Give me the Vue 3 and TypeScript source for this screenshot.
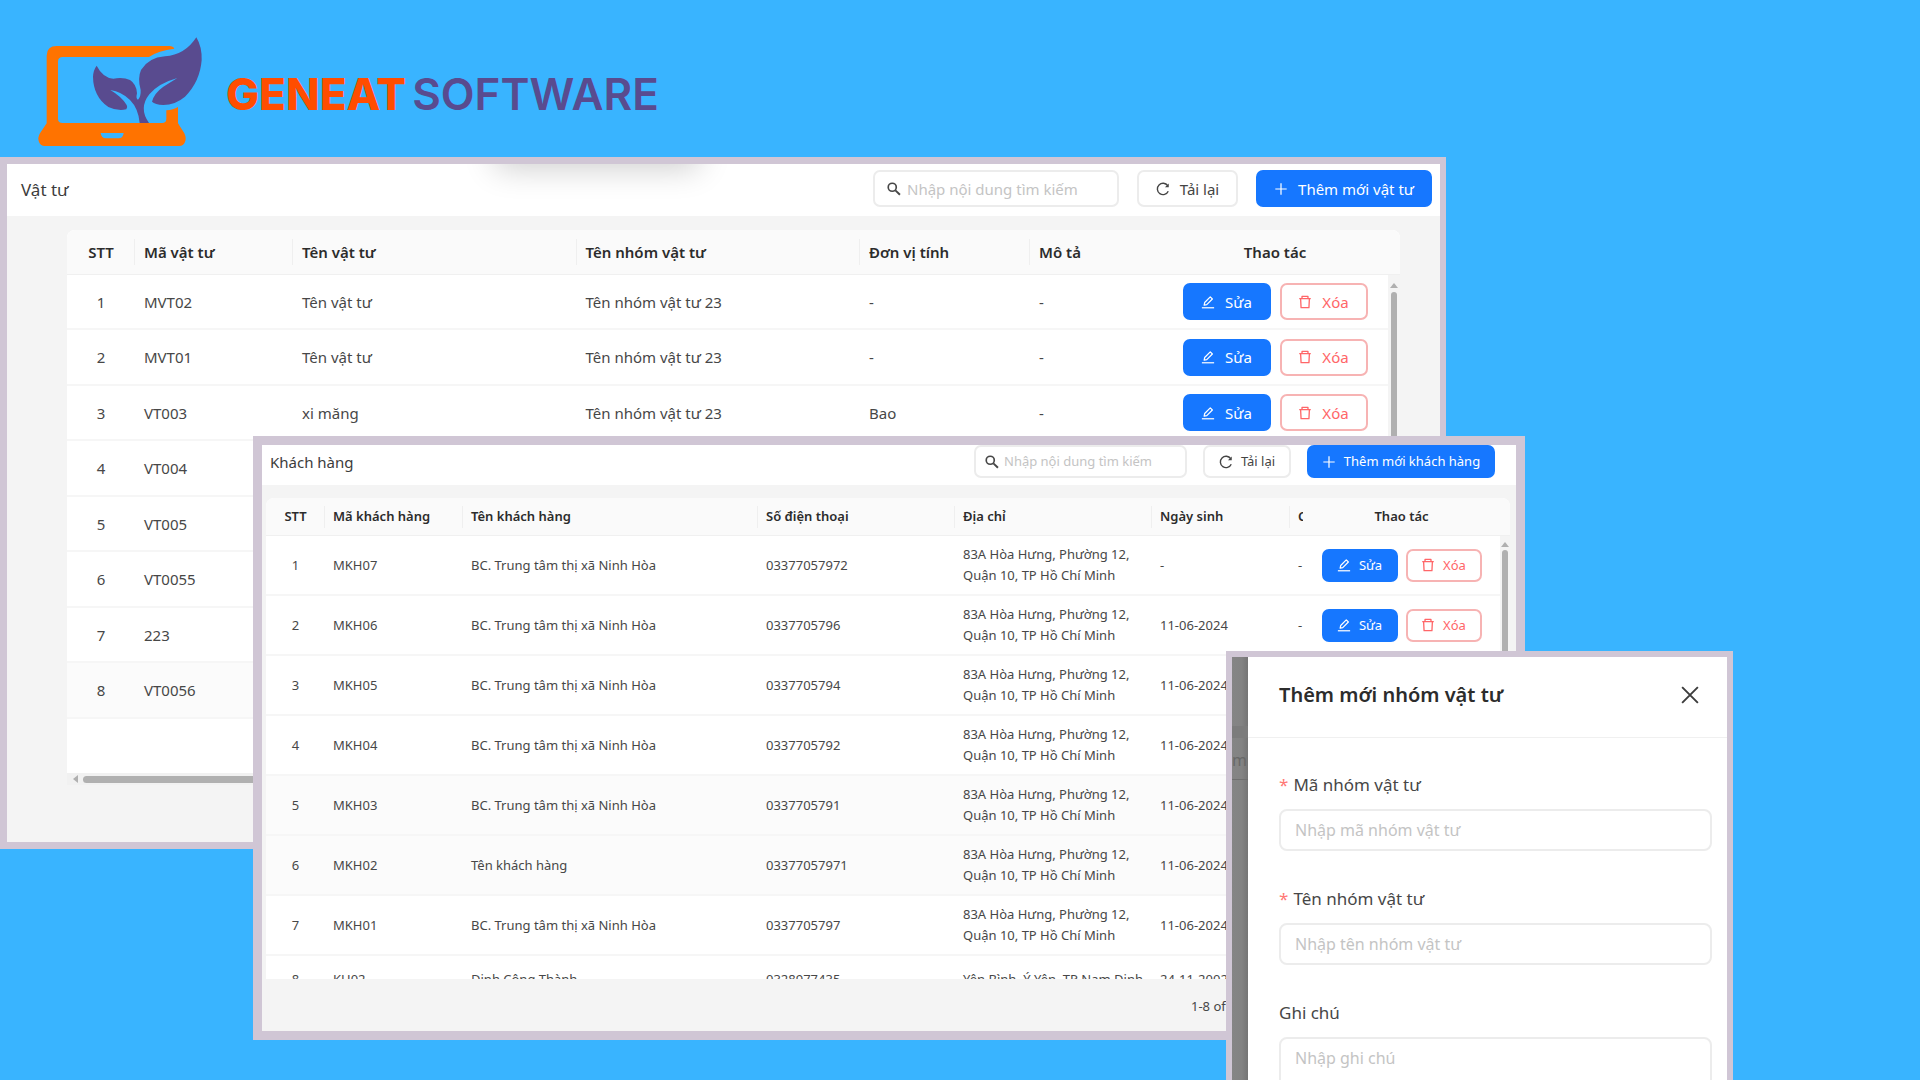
<script setup lang="ts">
import { ref } from 'vue'

interface Material {
  code: string
  name: string
  group: string
  unit: string
  note: string
}

interface Customer {
  code: string
  name: string
  phone: string
  address: string
  birthday: string
  extra: string
}

const materials: Material[] = [
  { code: 'MVT02', name: 'Tên vật tư', group: 'Tên nhóm vật tư 23', unit: '-', note: '-' },
  { code: 'MVT01', name: 'Tên vật tư', group: 'Tên nhóm vật tư 23', unit: '-', note: '-' },
  { code: 'VT003', name: 'xi măng', group: 'Tên nhóm vật tư 23', unit: 'Bao', note: '-' },
  { code: 'VT004', name: '', group: '', unit: '', note: '' },
  { code: 'VT005', name: '', group: '', unit: '', note: '' },
  { code: 'VT0055', name: '', group: '', unit: '', note: '' },
  { code: '223', name: '', group: '', unit: '', note: '' },
  { code: 'VT0056', name: '', group: '', unit: '', note: '' },
]

const centre = 'BC. Trung tâm thị xã Ninh Hòa'
const district = '83A Hòa Hưng, Phường 12, Quận 10, TP Hồ Chí Minh'

const customers: Customer[] = [
  { code: 'MKH07', name: centre, phone: '03377057972', address: district, birthday: '-', extra: '-' },
  { code: 'MKH06', name: centre, phone: '0337705796', address: district, birthday: '11-06-2024', extra: '-' },
  { code: 'MKH05', name: centre, phone: '0337705794', address: district, birthday: '11-06-2024', extra: '' },
  { code: 'MKH04', name: centre, phone: '0337705792', address: district, birthday: '11-06-2024', extra: '' },
  { code: 'MKH03', name: centre, phone: '0337705791', address: district, birthday: '11-06-2024', extra: '' },
  { code: 'MKH02', name: 'Tên khách hàng', phone: '03377057971', address: district, birthday: '11-06-2024', extra: '' },
  { code: 'MKH01', name: centre, phone: '0337705797', address: district, birthday: '11-06-2024', extra: '' },
  { code: 'KH02', name: 'Đinh Công Thành', phone: '0328977435', address: 'Yên Bình, Ý Yên, TP Nam Định', birthday: '24-11-2002', extra: '' },
]

const materialQuery = ref('')
const customerQuery = ref('')
const groupCode = ref('')
const groupName = ref('')
const groupNote = ref('')
</script>

<template>
  <main class="stage">
    <svg class="sprite" aria-hidden="true">
      <symbol id="i-search" viewBox="0 0 16 16">
        <circle cx="6" cy="6" r="4.6" fill="none" stroke="currentColor" stroke-width="1.9" />
        <path d="M9.6 9.6L14.8 14.6" fill="none" stroke="currentColor" stroke-width="2.2" />
      </symbol>
      <symbol id="i-reload" viewBox="0 0 16 16">
        <path d="M13.4 4.2A6.5 6.5 0 1 0 14 10.6" fill="none" stroke="currentColor" stroke-width="1.6" />
        <path d="M14.6 1.6V6H10.2Z" fill="currentColor" />
      </symbol>
      <symbol id="i-plus" viewBox="0 0 16 16">
        <path d="M8 1.5V14.5M1.5 8H14.5" fill="none" stroke="currentColor" stroke-width="1.4" />
      </symbol>
      <symbol id="i-edit" viewBox="0 0 16 16">
        <path d="M1 14.6H15" fill="none" stroke="currentColor" stroke-width="1.4" />
        <path d="M3.6 11.6L4.2 8.6L10.6 2.2L13 4.6L6.6 11Z" fill="none" stroke="currentColor" stroke-width="1.4" stroke-linejoin="round" />
      </symbol>
      <symbol id="i-trash" viewBox="0 0 16 16">
        <path d="M1.4 4.2H14.6M4.6 4V1.6H11.4V4M3 4.4L3.5 14.4H12.5L13 4.4" fill="none" stroke="currentColor" stroke-width="1.5" stroke-linejoin="round" />
      </symbol>
      <symbol id="i-close" viewBox="0 0 16 16">
        <path d="M1 1L15 15M15 1L1 15" fill="none" stroke="currentColor" stroke-width="1.7" />
      </symbol>
    </svg>

    <header class="brand">
      <svg class="brand-mark" viewBox="0 0 570 405" role="img" aria-label="Geneat Software">
        <path
          fill="#ff7300"
          fill-rule="evenodd"
          d="M50 295V92Q50 63 80 63H418Q430 63 433 71Q385 76 357 96H98Q84 96 84 110V281Q84 294 98 294H396Q409 294 409 281V256Q430 255 444 246V295L463 325Q470 340 465 351Q460 363 448 363H44Q32 363 27 351Q22 338 30 325ZM212 324H281Q279 340 266 340H228Q214 340 212 324Z"
        />
        <path
          fill="#594b8f"
          d="M499 37Q516 65 515 105Q510 170 465 215Q435 240 400 240Q375 238 366 230Q372 205 400 185L442 159Q385 175 358 208Q325 250 357 294H329Q325 250 300 225Q275 200 241 195Q275 215 290 240Q294 247 289 253Q265 260 235 246Q190 215 189 155Q190 135 200 122Q218 158 250 161Q280 156 300 165Q320 178 321 205Q317 222 324 224Q333 215 332 195Q322 160 333 135Q355 98 405 94Q465 90 499 37Z"
        />
      </svg>
      <h1 class="brand-name"><span class="brand-first">GENEAT</span><span class="brand-second">SOFTWARE</span></h1>
    </header>

    <section class="window materials">
      <header class="bar">
        <h2 class="bar-title">Vật tư</h2>
        <label class="search">
          <svg class="icon"><use href="#i-search" /></svg>
          <input v-model="materialQuery" type="text" placeholder="Nhập nội dung tìm kiếm" aria-label="Tìm kiếm vật tư" />
        </label>
        <button class="btn plain" type="button"><svg class="icon"><use href="#i-reload" /></svg>Tải lại</button>
        <button class="btn primary" type="button"><svg class="icon"><use href="#i-plus" /></svg>Thêm mới vật tư</button>
      </header>
      <div class="card">
        <div class="viewport">
          <table>
            <colgroup>
              <col class="c-index" /><col class="c-code" /><col /><col /><col class="c-unit" /><col class="c-note" /><col class="c-actions" /><col class="c-rail" />
            </colgroup>
            <thead>
              <tr>
                <th class="mid split">STT</th>
                <th class="split">Mã vật tư</th>
                <th class="split">Tên vật tư</th>
                <th class="split">Tên nhóm vật tư</th>
                <th class="split">Đơn vị tính</th>
                <th>Mô tả</th>
                <th class="mid">Thao tác</th>
                <th></th>
              </tr>
            </thead>
            <tbody>
              <tr v-for="(row, i) in materials" :key="row.code" :class="{ shaded: i === 7 }">
                <td class="mid">{{ i + 1 }}</td>
                <td>{{ row.code }}</td>
                <td>{{ row.name }}</td>
                <td>{{ row.group }}</td>
                <td>{{ row.unit }}</td>
                <td>{{ row.note }}</td>
                <td>
                  <div v-if="row.name" class="actions">
                    <button class="btn primary" type="button"><svg class="icon"><use href="#i-edit" /></svg>Sửa</button>
                    <button class="btn danger" type="button"><svg class="icon"><use href="#i-trash" /></svg>Xóa</button>
                  </div>
                </td>
                <td></td>
              </tr>
            </tbody>
          </table>
          <div class="rail"><span class="arrow-up"></span><span class="thumb"></span></div>
        </div>
        <div class="rail-x"><span class="arrow-left"></span><span class="thumb-x"></span></div>
      </div>
    </section>

    <section class="window customers">
      <header class="bar">
        <h2 class="bar-title">Khách hàng</h2>
        <label class="search">
          <svg class="icon"><use href="#i-search" /></svg>
          <input v-model="customerQuery" type="text" placeholder="Nhập nội dung tìm kiếm" aria-label="Tìm kiếm khách hàng" />
        </label>
        <button class="btn plain" type="button"><svg class="icon"><use href="#i-reload" /></svg>Tải lại</button>
        <button class="btn primary" type="button"><svg class="icon"><use href="#i-plus" /></svg>Thêm mới khách hàng</button>
      </header>
      <div class="card">
        <div class="viewport">
          <table>
            <colgroup>
              <col class="c-index" /><col class="c-code" /><col /><col class="c-phone" /><col class="c-address" /><col class="c-birthday" /><col class="c-extra" /><col class="c-actions" /><col class="c-rail" />
            </colgroup>
            <thead>
              <tr>
                <th class="mid split">STT</th>
                <th class="split">Mã khách hàng</th>
                <th class="split">Tên khách hàng</th>
                <th class="split">Số điện thoại</th>
                <th class="split">Địa chỉ</th>
                <th class="split">Ngày sinh</th>
                <th class="cut">C</th>
                <th class="mid">Thao tác</th>
                <th></th>
              </tr>
            </thead>
            <tbody>
              <tr v-for="(row, i) in customers" :key="row.code" :class="{ shaded: i === 4 || i === 5 }">
                <td class="mid">{{ i + 1 }}</td>
                <td>{{ row.code }}</td>
                <td>{{ row.name }}</td>
                <td>{{ row.phone }}</td>
                <td>{{ row.address }}</td>
                <td>{{ row.birthday }}</td>
                <td class="cut">{{ row.extra }}</td>
                <td>
                  <div v-if="row.extra" class="actions">
                    <button class="btn primary" type="button"><svg class="icon"><use href="#i-edit" /></svg>Sửa</button>
                    <button class="btn danger" type="button"><svg class="icon"><use href="#i-trash" /></svg>Xóa</button>
                  </div>
                </td>
                <td></td>
              </tr>
            </tbody>
          </table>
          <div class="rail"><span class="arrow-up"></span><span class="thumb"></span></div>
        </div>
        <p class="pager">1-8 of</p>
      </div>
    </section>

    <section class="window editor">
      <div class="mask"><span class="mask-field">m</span></div>
      <form class="drawer" @submit.prevent>
        <header class="drawer-head">
          <h2 class="drawer-title">Thêm mới nhóm vật tư</h2>
          <button class="close" type="button" aria-label="Đóng"><svg class="icon"><use href="#i-close" /></svg></button>
        </header>
        <div class="fields">
          <div class="field">
            <label class="required" for="group-code">Mã nhóm vật tư</label>
            <input id="group-code" v-model="groupCode" type="text" placeholder="Nhập mã nhóm vật tư" />
          </div>
          <div class="field">
            <label class="required" for="group-name">Tên nhóm vật tư</label>
            <input id="group-name" v-model="groupName" type="text" placeholder="Nhập tên nhóm vật tư" />
          </div>
          <div class="field">
            <label for="group-note">Ghi chú</label>
            <textarea id="group-note" v-model="groupNote" rows="4" placeholder="Nhập ghi chú"></textarea>
          </div>
        </div>
      </form>
    </section>
  </main>
</template>

<style>
body {
  margin: 0;
}
</style>

<style scoped>
* {
  box-sizing: border-box;
}

.stage {
  position: relative;
  min-height: 100vh;
  overflow: hidden;
  background: #39b4ff;
  color: #474747;
  font-family: 'Noto Sans', 'Open Sans', sans-serif;
}

.sprite {
  position: absolute;
  width: 0;
  height: 0;
}

h1,
h2,
p {
  margin: 0;
}

button,
input,
textarea {
  font: inherit;
}

.icon {
  flex: none;
  width: 14px;
  height: 14px;
}

/* Brand */
.brand {
  display: flex;
  align-items: center;
  gap: 6px;
  padding: 25px 0 0 30px;
}

.brand-mark {
  flex: none;
  width: 190px;
  height: 135px;
}

.brand-name {
  display: flex;
  gap: 6px;
  padding-top: 2px;
  font-family: Inter, sans-serif;
  font-size: 44px;
  line-height: 52px;
  font-weight: 600;
  color: #594b8f;
}

.brand-first {
  font-weight: 800;
  color: #ff4d00;
}

/* Windows */
.window {
  position: absolute;
  border: 7px solid #d0c6d5;
  background: #f4f4f4;
}

.bar {
  position: relative;
  display: flex;
  background: #fff;
  overflow: hidden;
}

.bar-title {
  flex: 1;
  font-weight: 400;
  color: #3c3c3c;
}

.search {
  display: flex;
  align-items: center;
  border: 2px solid #ececec;
  border-radius: 7px;
  background: #fff;
}

.search input {
  flex: 1;
  min-width: 0;
  padding: 0;
  border: 0;
  outline: 0;
  background: none;
}

input::placeholder,
textarea::placeholder {
  color: #c4c4c4;
  opacity: 1;
}

.btn {
  display: flex;
  align-items: center;
  justify-content: center;
  padding: 0;
  border: 2px solid #ececec;
  border-radius: 7px;
  background: #fff;
  color: #444;
  white-space: nowrap;
}

.btn.primary {
  border-color: #1677ff;
  background: #1677ff;
  color: #fff;
}

.btn.danger {
  border-color: #f7b3b3;
  color: #ff6668;
}

.actions {
  display: flex;
  justify-content: center;
}

table {
  width: 100%;
  table-layout: fixed;
  border-collapse: separate;
  border-spacing: 0;
  background: #fff;
}

th {
  border-bottom: 1px solid #f0f0f0;
  background: #fafafa;
  color: #2c2c2c;
  font-weight: 600;
  text-align: left;
}

th.split {
  background: linear-gradient(#efefef, #efefef) right center / 1px 26px no-repeat #fafafa;
}

td {
  border-bottom: 2px solid #f6f6f6;
}

.shaded td {
  background: #fbfbfb;
}

th.mid,
td.mid {
  text-align: center;
}

.viewport {
  position: relative;
  overflow: hidden;
  border-radius: 8px 8px 0 0;
}

.rail {
  position: absolute;
  right: 0;
  bottom: 0;
  display: flex;
  flex-direction: column;
  align-items: center;
  gap: 4px;
  padding-top: 8px;
  background: #f4f4f4;
}

.arrow-up {
  border: 4px solid transparent;
  border-top: 0;
  border-bottom: 5px solid #b0b0b0;
}

.thumb {
  flex: 1;
  width: 6px;
  border-radius: 3px;
  background: #b0b0b0;
}

/* Materials */
.materials {
  top: 157px;
  left: 0;
  right: 474px;
  border-right-width: 6px;
  font-size: 15px;
  line-height: 24px;
}

.materials .bar {
  gap: 18px;
  height: 52px;
  padding: 6px 8px 0 14px;
}

.materials .bar::before {
  content: '';
  position: absolute;
  top: -40px;
  left: 488px;
  width: 204px;
  height: 40px;
  box-shadow: 0 4px 32px rgba(0, 0, 0, 0.2);
}

.materials .bar-title {
  font-size: 17px;
  line-height: 40px;
}

.materials .search {
  width: 246px;
  height: 37px;
  gap: 6px;
  padding: 0 12px;
}

.materials .btn {
  height: 37px;
  gap: 10px;
}

.materials .bar .plain {
  width: 101px;
}

.materials .bar .primary {
  width: 176px;
}

.materials .card {
  margin: 14px 40px 57px 60px;
}

.materials .viewport {
  padding-bottom: 54px;
  background: #fff;
}

.materials th {
  height: 45px;
  padding: 0 9px;
}

.materials td {
  height: 55px;
  padding: 0 9px;
}

.materials tr:nth-child(even) td {
  height: 56px;
}

.materials .actions {
  gap: 9px;
}

.materials .actions .btn {
  width: 88px;
}

.materials .c-index {
  width: 68px;
}

.materials .c-code {
  width: 158px;
}

.materials .c-unit {
  width: 170px;
}

.materials .c-note {
  width: 132px;
}

.materials .c-actions {
  width: 226px;
}

.materials .c-rail {
  width: 12px;
}

.materials .rail {
  top: 45px;
  width: 12px;
}

.rail-x {
  display: flex;
  align-items: center;
  gap: 5px;
  height: 12px;
  padding: 0 12px 0 6px;
  background: #f1f1f1;
}

.arrow-left {
  border: 4px solid transparent;
  border-left: 0;
  border-right: 5px solid #b0b0b0;
}

.thumb-x {
  flex: 1;
  height: 7px;
  border-radius: 4px;
  background: #b0b0b0;
}

/* Customers */
.customers {
  top: 436px;
  left: 253px;
  right: 395px;
  border-width: 9px;
  font-size: 13px;
  line-height: 21px;
}

.customers .bar {
  gap: 16px;
  height: 40px;
  padding: 0 21px 0 8px;
}

.customers .bar-title {
  font-size: 15px;
  line-height: 34px;
}

.customers .search {
  width: 213px;
  height: 33px;
  gap: 5px;
  padding: 0 9px;
}

.customers .btn {
  height: 33px;
  gap: 8px;
}

.customers .bar .plain {
  width: 88px;
}

.customers .bar .primary {
  width: 188px;
}

.customers .card {
  margin: 13px 6px 0 4px;
}

.customers .viewport {
  height: 481px;
}

.customers th {
  height: 38px;
  padding: 0 8px;
}

.customers th.split {
  background-size: 1px 22px;
}

.customers td {
  height: 60px;
  padding: 0 8px;
}

.customers tr:last-child td {
  height: 49px;
}

.customers tr .cut {
  padding-right: 0;
  overflow: hidden;
}

.customers .actions {
  gap: 8px;
}

.customers .actions .btn {
  width: 76px;
}

.customers .c-index {
  width: 59px;
}

.customers .c-code {
  width: 138px;
}

.customers .c-phone,
.customers .c-address {
  width: 197px;
}

.customers .c-birthday {
  width: 138px;
}

.customers .c-extra {
  width: 13px;
}

.customers .c-actions {
  width: 197px;
}

.customers .c-rail {
  width: 10px;
}

.customers .rail {
  top: 38px;
  width: 10px;
  gap: 3px;
  padding-top: 6px;
}

.pager {
  padding: 17px 0 14px 925px;
}

/* Editor drawer */
.editor {
  top: 651px;
  right: 187px;
  display: flex;
  width: 507px;
  border-width: 6px;
  font-size: 16px;
  line-height: 24px;
}

.mask {
  width: 16px;
  padding-top: 69px;
  background: linear-gradient(to right, #858585, #838383 60%, #757575);
}

.mask-field {
  display: block;
  height: 54px;
  border-top: 12px solid #7c7c7c;
  border-bottom: 1px solid #6f6f6f;
  color: #686868;
  line-height: 44px;
}

.drawer {
  flex: 1;
  background: #fff;
}

.drawer-head {
  display: flex;
  align-items: center;
  justify-content: space-between;
  height: 81px;
  padding: 0 28px 4px 31px;
  border-bottom: 1px solid #f0f0f0;
}

.drawer-title {
  font-size: 20px;
  line-height: 28px;
  font-weight: 600;
  color: #2c2c2c;
}

.close {
  display: flex;
  padding: 0;
  border: 0;
  background: none;
  color: #3c3c3c;
}

.close .icon {
  width: 18px;
  height: 18px;
}

.fields {
  display: flex;
  flex-direction: column;
  gap: 36px;
  padding: 35px 15px 24px 31px;
}

.field {
  display: flex;
  flex-direction: column;
  gap: 12px;
}

.field label {
  font-size: 17px;
}

.required::before {
  content: '*';
  margin-right: 5px;
  color: #ff7875;
}

.field input,
.field textarea {
  padding: 7px 14px;
  border: 2px solid #ececec;
  border-radius: 8px;
  background: #fff;
  outline: 0;
  resize: none;
}

.field input {
  height: 42px;
}
</style>
